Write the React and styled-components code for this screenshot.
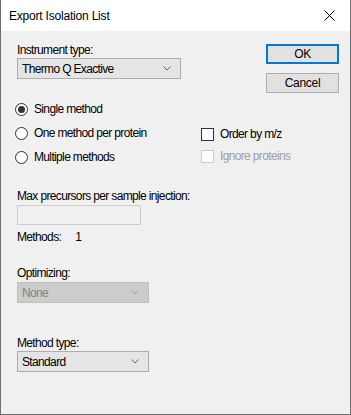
import React, { useState } from "react";
import styled, { createGlobalStyle } from "styled-components";

const GlobalStyle = createGlobalStyle`
  html, body {
    margin: 0;
    padding: 0;
    background: #ffffff;
  }
  body {
    font-family: "Liberation Sans", Arial, sans-serif;
    font-size: 12px;
    color: #000;
  }
`;

const Window = styled.div`
  width: 351px;
  height: 415px;
  box-sizing: border-box;
  border: 1px solid #6f6f6f;
  border-top: none;
  display: flex;
  flex-direction: column;
  background: #f0f0f0;
`;

const TitleBar = styled.div`
  height: 31px;
  flex: none;
  background: #ffffff;
  display: flex;
  align-items: center;
  justify-content: space-between;
  padding: 0 10px 0 8px;
  font-size: 12px;
  letter-spacing: -0.2px;
`;

const CloseIcon = styled.svg`
  width: 11px;
  height: 11px;
  margin-right: 5px;
`;

const Body = styled.div`
  flex: 1;
  padding: 12px 11px 0 16px;
  display: flex;
  flex-direction: column;
  letter-spacing: -0.65px;
`;

const TopRow = styled.div`
  display: flex;
  justify-content: space-between;
`;

const Field = styled.div`
  display: flex;
  flex-direction: column;
  margin-top: ${(p) => p.$top || 0}px;
`;

const Label = styled.div`
  line-height: 15px;
  height: 15px;
  margin-bottom: ${(p) => p.$gap || 0}px;
`;

const Combo = styled.div`
  box-sizing: border-box;
  width: ${(p) => p.$width}px;
  height: 21px;
  display: flex;
  align-items: center;
  justify-content: space-between;
  padding: 0 9px 0 4px;
  background: ${(p) => (p.$disabled ? "#cccccc" : "#e5e5e5")};
  border: 1px solid ${(p) => (p.$disabled ? "#bfbfbf" : "#adadad")};
  color: ${(p) => (p.$disabled ? "#838383" : "#000")};
`;

const Buttons = styled.div`
  display: flex;
  flex-direction: column;
  gap: 9px;
  padding-top: 1px;
`;

const Button = styled.button`
  box-sizing: border-box;
  width: 73px;
  height: 20px;
  padding: 0;
  background: #e1e1e1;
  border: ${(p) => (p.$primary ? "2px solid #0078d7" : "1px solid #adadad")};
  font-family: inherit;
  font-size: 12px;
  letter-spacing: -0.3px;
  color: #000;
`;

const OptionsRow = styled.div`
  display: flex;
  margin-top: 4px;
`;

const RadioColumn = styled.div`
  width: 184px;
  display: flex;
  flex-direction: column;
`;

const CheckColumn = styled.div`
  display: flex;
  flex-direction: column;
  padding-top: 26px;
`;

const OptionRow = styled.label`
  display: flex;
  align-items: center;
  height: ${(p) => p.$h}px;
  gap: 6px;
  color: ${(p) => (p.$disabled ? "#a0a0a0" : "#000")};
`;

const RadioCircle = styled.span`
  box-sizing: border-box;
  width: 13px;
  height: 13px;
  border-radius: 50%;
  border: 1px solid #333333;
  background: #ffffff;
  display: flex;
  align-items: center;
  justify-content: center;
  margin-left: -2px;
  &::after {
    content: "";
    width: 7px;
    height: 7px;
    border-radius: 50%;
    background: ${(p) => (p.$on ? "#333333" : "transparent")};
  }
`;

const CheckBox = styled.span`
  box-sizing: border-box;
  width: 13px;
  height: 13px;
  border: 1px solid ${(p) => (p.$disabled ? "#cccccc" : "#333333")};
  background: #ffffff;
`;

const TextInput = styled.div`
  box-sizing: border-box;
  width: 124px;
  height: 20px;
  border: 1px solid #cccccc;
  background: #f0f0f0;
  margin-top: 1px;
`;

const MethodsLine = styled.div`
  display: flex;
  gap: 14px;
  line-height: 15px;
  margin-top: 5px;
`;

function Chevron({ color }) {
  return (
    <svg width="8" height="5" viewBox="0 0 8 5">
      <path d="M0.5 0.5 L4 4 L7.5 0.5" fill="none" stroke={color} strokeWidth="1" />
    </svg>
  );
}

function App() {
  const [method, setMethod] = useState("single");

  const radios = [
    { id: "single", text: "Single method" },
    { id: "perProtein", text: "One method per protein" },
    { id: "multiple", text: "Multiple methods" },
  ];

  return (
    <>
      <GlobalStyle />
      <Window>
        <TitleBar>
          <span>Export Isolation List</span>
          <CloseIcon viewBox="0 0 11 11">
            <path d="M0.5 0.5 L10.5 10.5 M10.5 0.5 L0.5 10.5" stroke="#000" strokeWidth="1" />
          </CloseIcon>
        </TitleBar>
        <Body>
          <TopRow>
            <Field>
              <Label>Instrument type:</Label>
              <Combo $width={164}>
                <span>Thermo Q Exactive</span>
                <Chevron color="#606060" />
              </Combo>
            </Field>
            <Buttons>
              <Button $primary>OK</Button>
              <Button>Cancel</Button>
            </Buttons>
          </TopRow>

          <OptionsRow>
            <RadioColumn>
              {radios.map((r) => (
                <OptionRow key={r.id} $h={24} onClick={() => setMethod(r.id)}>
                  <RadioCircle $on={method === r.id} />
                  {r.text}
                </OptionRow>
              ))}
            </RadioColumn>
            <CheckColumn>
              <OptionRow $h={22}>
                <CheckBox />
                Order by m/z
              </OptionRow>
              <OptionRow $h={22} $disabled>
                <CheckBox $disabled />
                Ignore proteins
              </OptionRow>
            </CheckColumn>
          </OptionsRow>

          <Field $top={20}>
            <Label>Max precursors per sample injection:</Label>
            <TextInput />
          </Field>
          <MethodsLine>
            <span>Methods:</span>
            <span>1</span>
          </MethodsLine>

          <Field $top={21}>
            <Label $gap={1}>Optimizing:</Label>
            <Combo $width={132} $disabled>
              <span>None</span>
              <Chevron color="#a0a0a0" />
            </Combo>
          </Field>

          <Field $top={33}>
            <Label>Method type:</Label>
            <Combo $width={132}>
              <span>Standard</span>
              <Chevron color="#606060" />
            </Combo>
          </Field>
        </Body>
      </Window>
    </>
  );
}

export default App;
